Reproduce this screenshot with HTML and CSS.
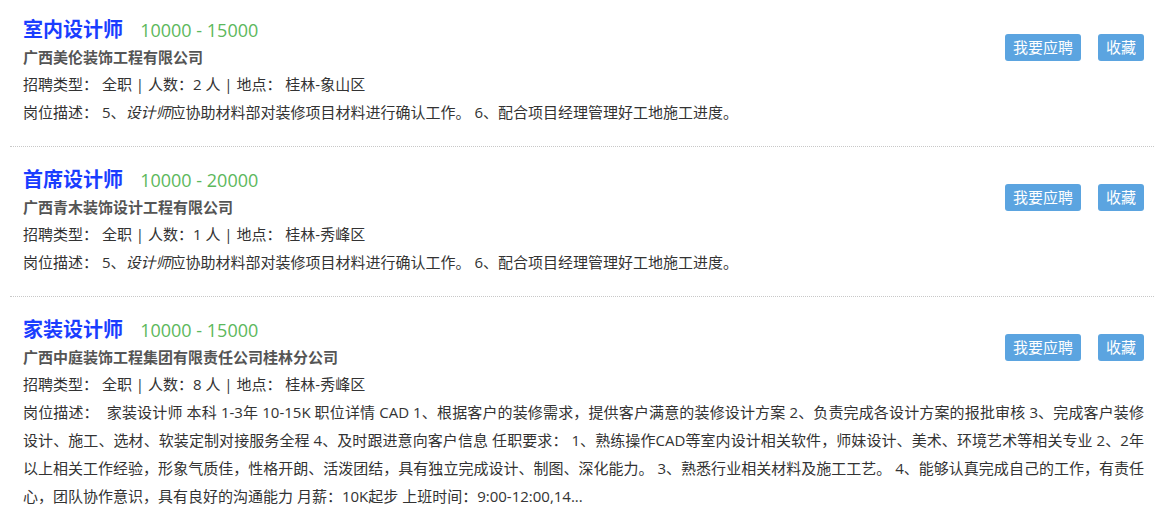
FILE: index.html
```html
<!DOCTYPE html>
<html lang="zh-CN">
<head>
    <meta charset="UTF-8">
    <meta name="viewport" content="width=device-width, initial-scale=1.0">
    <title>职位列表</title>
    <link rel="stylesheet" href="styles.css">
</head>
<body>

    <div class="job-list">

        <!-- 职位 1 -->
        <div class="job-item">
            <div class="job-head">
                <div class="job-info">
                    <h3 class="job-title">
                        <a href="#">室内设计师</a>
                        <span class="salary">10000 - 15000</span>
                    </h3>
                    <p class="company">广西美伦装饰工程有限公司</p>
                    <p class="meta">招聘类型： 全职 | 人数：2 人 | 地点： 桂林-象山区</p>
                </div>
                <div class="job-actions">
                    <a href="#" class="btn">我要应聘</a>
                    <a href="#" class="btn">收藏</a>
                </div>
            </div>
            <p class="desc">岗位描述： 5、<em>设计师</em>应协助材料部对装修项目材料进行确认工作。 6、配合项目经理管理好工地施工进度。</p>
        </div>

        <!-- 职位 2 -->
        <div class="job-item">
            <div class="job-head">
                <div class="job-info">
                    <h3 class="job-title">
                        <a href="#">首席设计师</a>
                        <span class="salary">10000 - 20000</span>
                    </h3>
                    <p class="company">广西青木装饰设计工程有限公司</p>
                    <p class="meta">招聘类型： 全职 | 人数：1 人 | 地点： 桂林-秀峰区</p>
                </div>
                <div class="job-actions">
                    <a href="#" class="btn">我要应聘</a>
                    <a href="#" class="btn">收藏</a>
                </div>
            </div>
            <p class="desc">岗位描述： 5、<em>设计师</em>应协助材料部对装修项目材料进行确认工作。 6、配合项目经理管理好工地施工进度。</p>
        </div>

        <!-- 职位 3 -->
        <div class="job-item">
            <div class="job-head">
                <div class="job-info">
                    <h3 class="job-title">
                        <a href="#">家装设计师</a>
                        <span class="salary">10000 - 15000</span>
                    </h3>
                    <p class="company">广西中庭装饰工程集团有限责任公司桂林分公司</p>
                    <p class="meta">招聘类型： 全职 | 人数：8 人 | 地点： 桂林-秀峰区</p>
                </div>
                <div class="job-actions">
                    <a href="#" class="btn">我要应聘</a>
                    <a href="#" class="btn">收藏</a>
                </div>
            </div>
            <p class="desc">岗位描述：&nbsp; 家装设计师 本科 1-3年 10-15K 职位详情 CAD 1、根据客户的装修需求，提供客户满意的装修设计方案 2、负责完成各设计方案的报批审核 3、完成客户装修设计、施工、选材、软装定制对接服务全程 4、及时跟进意向客户信息 任职要求： 1、熟练操作CAD等室内设计相关软件，师妹设计、美术、环境艺术等相关专业 2、2年以上相关工作经验，形象气质佳，性格开朗、活泼团结，具有独立完成设计、制图、深化能力。 3、熟悉行业相关材料及施工工艺。 4、能够认真完成自己的工作，有责任心，团队协作意识，具有良好的沟通能力 月薪：10K起步 上班时间：9:00-12:00,14...</p>
        </div>

    </div>

</body>
</html>
```

FILE: styles.css
```css
body {
    margin: 0;
    background: #fff;
    color: #333;
    font-family: "Open Sans", "Noto Sans CJK SC", sans-serif;
    font-size: 15px;
}

.job-list {
    padding-left: 10px;
}

.job-item {
    padding: 19px 10px 20px 13px;
    border-bottom: 1px dotted #c8c8c8;
}

.job-item:first-child {
    padding-top: 16px;
}

.job-head {
    display: flex;
    justify-content: space-between;
    align-items: flex-start;
}

.job-title {
    margin: 0;
    height: 28px;
    line-height: 28px;
    font-size: 20px;
    font-weight: bold;
}

.job-title a {
    color: #1a3dff;
    text-decoration: none;
}

.salary {
    margin-left: 12px;
    font-size: 18px;
    font-weight: normal;
    color: #5cb85c;
}

.company {
    margin: 0;
    line-height: 27px;
    font-weight: bold;
    color: #555;
}

.meta {
    margin: 0;
    line-height: 27px;
}

.desc {
    margin: 0;
    line-height: 28px;
    text-align: justify;
}

.desc em {
    font-style: italic;
}

.job-actions {
    display: flex;
    gap: 17px;
    margin-top: 18px;
}

.btn {
    display: inline-block;
    height: 27px;
    line-height: 27px;
    padding: 0 8px;
    background: #5ba4e0;
    color: #fff;
    border-radius: 3px;
    text-decoration: none;
    font-size: 15px;
}
```
